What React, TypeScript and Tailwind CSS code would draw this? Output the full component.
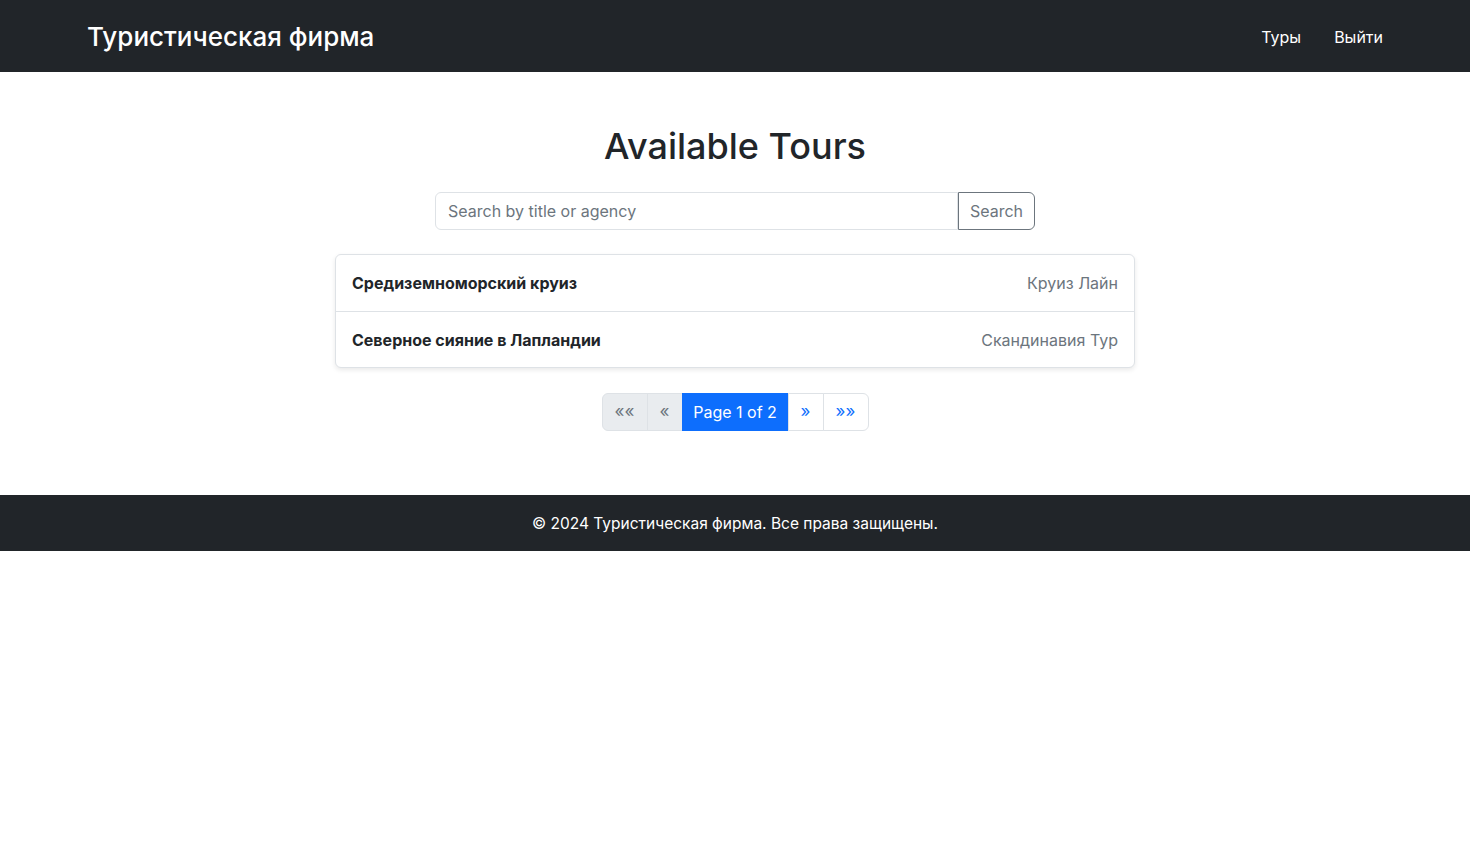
import React from "react";

type Tour = {
  title: string;
  agency: string;
};

const tours: Tour[] = [
  { title: "Средиземноморский круиз", agency: "Круиз Лайн" },
  { title: "Северное сияние в Лапландии", agency: "Скандинавия Тур" },
];

const App: React.FC = () => {
  return (
    <div
      className="min-h-screen bg-white text-[#212529]"
      style={{ fontFamily: "Inter, 'Noto Sans', sans-serif" }}
    >
      <nav className="h-[72px] bg-[#212529]">
        <div className="mx-auto flex h-full max-w-[1320px] items-center justify-between px-3">
          <span className="text-[26px] font-medium text-white">Туристическая фирма</span>
          <div className="flex items-center gap-[33px] pt-0.5">
            <a className="text-base text-white">Туры</a>
            <a className="text-base text-white">Выйти</a>
          </div>
        </div>
      </nav>

      <main className="mx-auto flex max-w-[1320px] flex-col items-center px-3 pt-[50px] pb-16">
        <h1 className="mb-[22px] text-[36px] leading-[48px] font-medium">Available Tours</h1>

        <div className="flex h-[38px] w-[600px]">
          <input
            className="h-full flex-1 rounded-l-md border border-[#dee2e6] px-3 text-base text-[#212529] outline-none placeholder:text-[#6c757d]"
            placeholder="Search by title or agency"
          />
          <button className="h-full w-[77px] rounded-r-md border border-[#6c757d] text-base text-[#6c757d]">
            Search
          </button>
        </div>

        <div className="mt-6 w-[800px] rounded-md border border-[#dee2e6] bg-white shadow-[0_2px_5px_rgba(0,0,0,0.09)]">
          {tours.map((tour, index) => (
            <div
              key={index}
              className={`flex h-[56px] items-center justify-between px-4 ${index > 0 ? "border-t border-[#dee2e6]" : ""}`}
            >
              <span className="text-base font-bold">{tour.title}</span>
              <span className="text-base text-[#6c757d]">{tour.agency}</span>
            </div>
          ))}
        </div>

        <div className="mt-[25px] flex h-[38px] text-base">
          <span className="flex w-[46px] items-center justify-center rounded-l-md border border-[#dee2e6] bg-[#e9ecef] text-[17px] text-[#6c757d]">
            ««
          </span>
          <span className="-ml-px flex w-[36px] items-center justify-center border border-[#dee2e6] bg-[#e9ecef] text-[17px] text-[#6c757d]">
            «
          </span>
          <span className="-ml-px flex w-[107px] items-center justify-center border border-[#0d6efd] bg-[#0d6efd] text-white">
            Page 1 of 2
          </span>
          <span className="-ml-px flex w-[36px] items-center justify-center border border-[#dee2e6] bg-white text-[17px] text-[#0d6efd]">
            »
          </span>
          <span className="-ml-px flex w-[46px] items-center justify-center rounded-r-md border border-[#dee2e6] bg-white text-[17px] text-[#0d6efd]">
            »»
          </span>
        </div>
      </main>

      <footer className="flex h-[56px] items-center justify-center bg-[#212529] pt-px">
        <span className="text-[15.5px] text-white">© 2024 Туристическая фирма. Все права защищены.</span>
      </footer>
    </div>
  );
};

export default App;
